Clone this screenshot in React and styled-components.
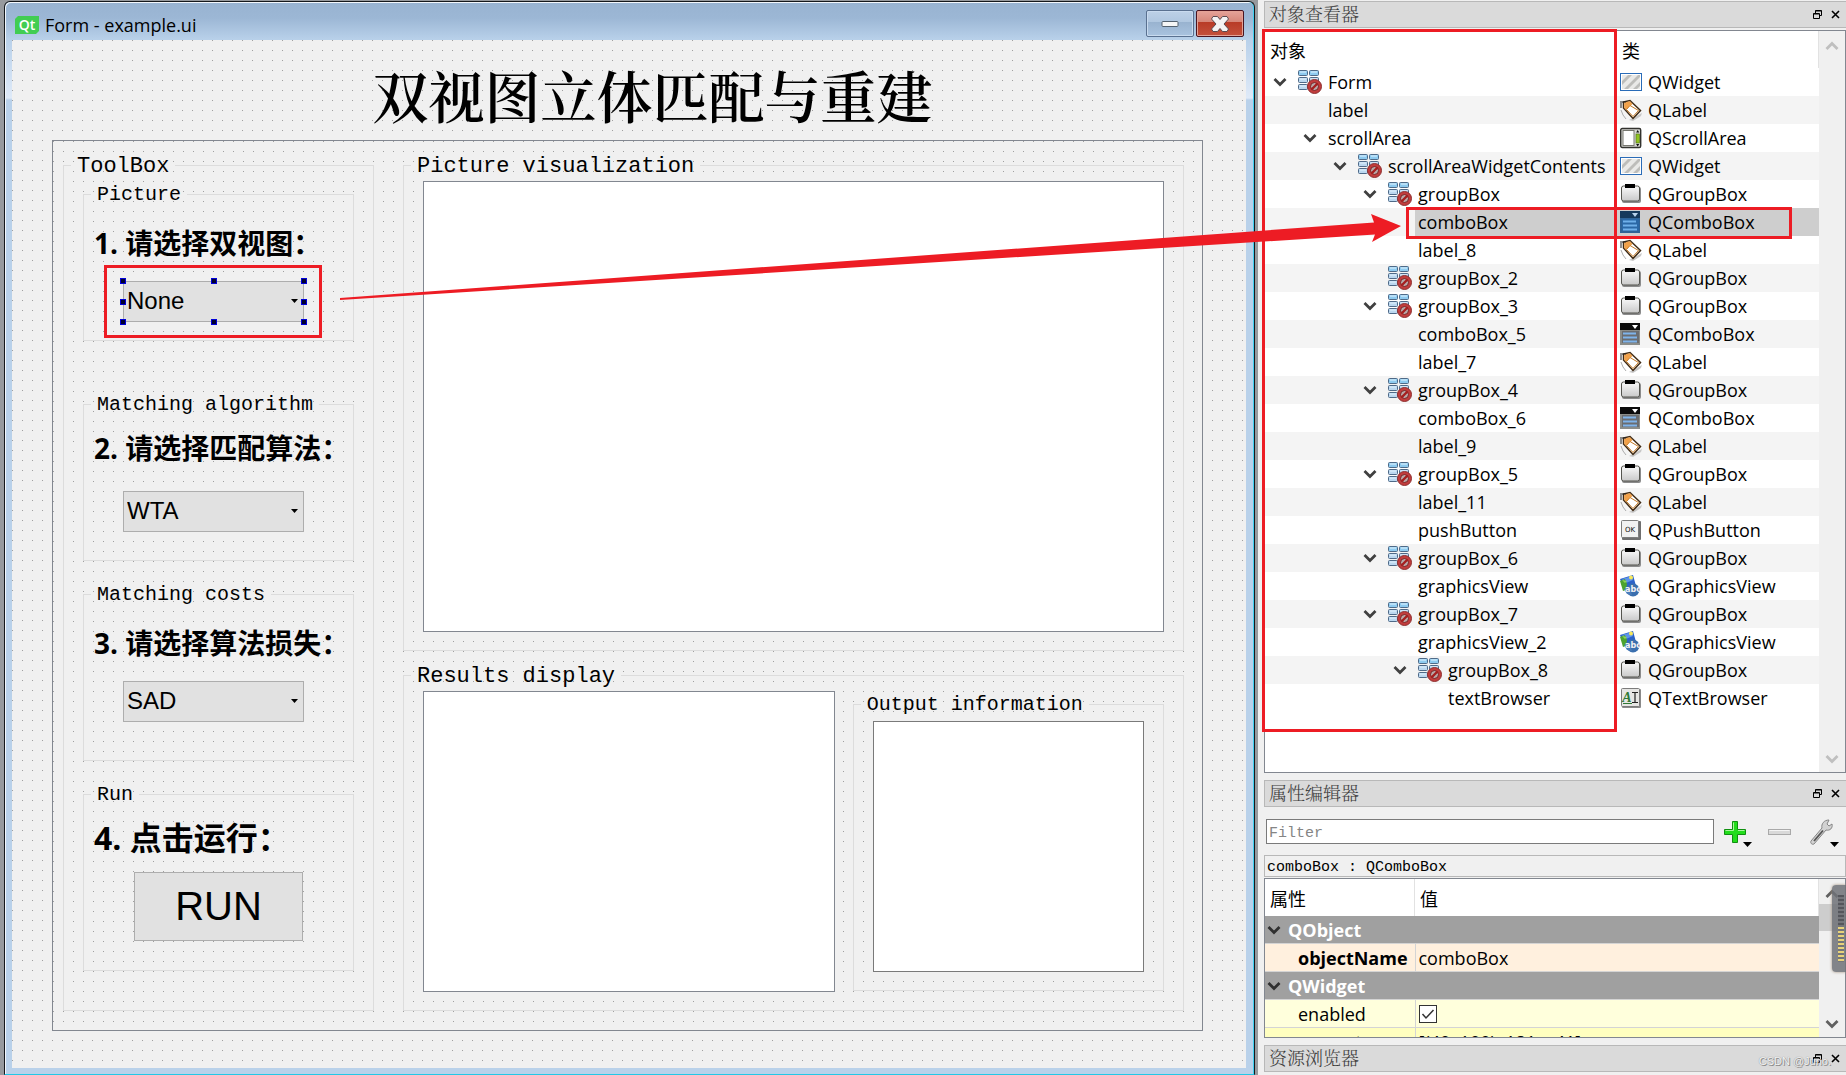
import React, { useState } from "react";
import styled, { createGlobalStyle } from "styled-components";

const RED = "#ed1c24";
const UI_FONT = `"Open Sans", "Noto Sans CJK SC", sans-serif`;
const SONG_FONT = `"Liberation Mono", "Noto Serif CJK SC", "Noto Sans CJK SC", monospace`;

const GlobalStyle = createGlobalStyle`
  * {
    box-sizing: border-box;
  }
  body {
    margin: 0;
    background: #f0f0f0;
    color: #000;
    font-family: ${UI_FONT};
    overflow: hidden;
  }
`;

const PageStyled = styled.div`
  position: relative;
  display: grid;
  grid-template-columns: 1258fr 588fr;
  min-height: 100vh;
`;

/* ---------- form window ---------- */

const DeskStyled = styled.div`
  background: #979a9e;
  padding: 1px 3px 0 4px;
`;

const WindowStyled = styled.section`
  display: flex;
  flex-direction: column;
  height: 100%;
  border: 1px solid #15181c;
  border-bottom: 1px solid #22c8e6;
  border-top-left-radius: 6px;
  border-top-right-radius: 6px;
  box-shadow: inset -1px 0 #3fd0f0, inset 1px 1px #f2f7fc;
  padding: 1px 8px 6px 7px;
  background: linear-gradient(
    #98b3d1 0,
    #9cb7d5 16px,
    #b9d1ea 38px,
    #dfeaf8 96px,
    #b9d1ea 98px
  );
`;

const TitleBarStyled = styled.header`
  display: flex;
  align-items: center;
  gap: 6px;
  height: 37px;
  padding: 7px 2px 0 3px;
`;

const WindowTitleStyled = styled.h1`
  flex: 1;
  margin: 0;
  font-size: 18px;
  font-weight: 400;
  line-height: 24px;
`;

const WindowButtonsStyled = styled.div`
  display: flex;
  align-self: flex-start;
  gap: 2px;
`;

const WindowButtonStyled = styled.button`
  display: flex;
  align-items: center;
  justify-content: center;
  width: 48px;
  height: 27px;
  padding: 0;
  border: 1px solid ${(props) => (props.$close ? "#4a1420" : "#5a7190")};
  border-radius: 2px;
  box-shadow: inset 0 0 0 1px
    ${(props) => (props.$close ? "#e3a296" : "#c9dbef")};
  background: ${(props) =>
    props.$close
      ? "linear-gradient(#e5a399 0, #d6877a 42%, #b83a26 43%, #c4513c 100%)"
      : "linear-gradient(#bdd1e7 0, #b0c7e0 42%, #98b2cf 43%, #a9c3df 100%)"};
`;

const CanvasStyled = styled.main`
  flex: 1;
  display: flex;
  flex-direction: column;
  padding: 0 43px 37px 40px;
  background-color: #f0f0f0;
  background-image: conic-gradient(
    from 0deg at 1px 1px,
    transparent 75%,
    #a0a0a0 75%
  );
  background-size: 10px 10px;
`;

const FormTitleStyled = styled.h2`
  margin: 0;
  padding-left: 50px;
  font-family: "Noto Serif CJK SC", "Noto Sans CJK SC", serif;
  font-size: 56px;
  font-weight: 600;
  line-height: 108px;
  height: 100px;
  text-align: center;
  white-space: nowrap;
`;

const ScrollAreaStyled = styled.div`
  flex: 1;
  display: flex;
  gap: 29px;
  padding: 13px 18px 19px 10px;
  border: 1px solid #828790;
  background-color: #f0f0f0;
  background-image: conic-gradient(
    from 0deg at 1px 1px,
    transparent 75%,
    #a0a0a0 75%
  );
  background-size: 10px 10px;
`;

const GroupStyled = styled.fieldset`
  display: flex;
  flex-direction: column;
  flex: ${(props) => props.$flex || "none"};
  min-width: 0;
  margin: ${(props) => props.$margin || "0"};
  padding: 0;
  border: 1px solid #dcdcdc;
`;

const GroupTitleStyled = styled.legend`
  margin-left: 7px;
  padding: 0 6px;
  font-family: "Liberation Mono", monospace;
  font-size: ${(props) => (props.$small ? "20px" : "22px")};
  line-height: ${(props) => (props.$small ? "24px" : "26px")};
  height: 23px;
`;

const ToolListStyled = styled.div`
  display: flex;
  flex-direction: column;
  gap: 22px;
  width: 309px;
  padding: 6px 19px 39px;
`;

const ToolBodyStyled = styled.div`
  display: flex;
  flex-direction: column;
  align-items: flex-start;
  gap: ${(props) => props.$gap};
  padding: ${(props) => props.$pad};
`;

const StepLabelStyled = styled.label`
  padding-left: 10px;
  font-size: ${(props) => (props.$large ? "32px" : "28px")};
  font-weight: 700;
  line-height: 40px;
  height: 40px;
  white-space: nowrap;
`;

const ComboWrapStyled = styled.div`
  position: relative;
  width: 181px;
  height: 41px;
  margin-left: 39px;
`;

const ComboStyled = styled.select`
  appearance: none;
  width: 100%;
  height: 100%;
  padding: 0 3px 2px;
  border: 1px solid #adadad;
  border-radius: 0;
  background: #e1e1e1;
  color: #000;
  font-family: "Liberation Sans", sans-serif;
  font-size: 24px;
`;

const ComboArrowStyled = styled.svg`
  position: absolute;
  right: 6px;
  top: 18px;
  pointer-events: none;
`;

const HandleStyled = styled.i`
  position: absolute;
  left: ${(props) => props.$x};
  top: ${(props) => props.$y};
  width: 6px;
  height: 6px;
  margin: -3px;
  background: #000030;
  border: 1px solid #0000d8;
`;

const MarkStyled = styled.div`
  position: absolute;
  inset: ${(props) => props.$inset};
  border: 3px solid ${RED};
  pointer-events: none;
`;

const RunButtonStyled = styled.button`
  width: 169px;
  height: 69px;
  margin-left: 50px;
  padding: 0;
  border: 1px solid #adadad;
  background: #e1e1e1;
  color: #000;
  font-family: "Liberation Sans", sans-serif;
  font-size: 40px;
`;

const DisplayColumnStyled = styled.div`
  flex: 1;
  min-width: 0;
  display: flex;
  flex-direction: column;
  gap: 13px;
`;

const DisplayBodyStyled = styled.div`
  flex: 1;
  display: flex;
  gap: 18px;
  padding: ${(props) => props.$top || "4px"} 19px 18px;
`;

const ViewStyled = styled.div`
  flex: ${(props) => props.$grow || 1} 1 0;
  border: 1px solid ${(props) => (props.$plain ? "#7a7a7a" : "#828790")};
  background: #fff;
`;

/* ---------- docks ---------- */

const DockColumnStyled = styled.aside`
  display: flex;
  flex-direction: column;
  min-width: 0;
  padding: 1px 0 3px 6px;
`;

const DockTitleStyled = styled.header`
  display: flex;
  align-items: center;
  gap: 9px;
  height: 27px;
  padding: 0 6px 0 4px;
  border: 1px solid #b8b8b8;
  border-right: none;
  background: #dadada;
  h2 {
    flex: 1;
    margin: 0;
    padding-top: 3px;
    color: #3c3c3c;
    font-family: ${SONG_FONT};
    font-size: 18px;
    font-weight: 300;
    line-height: 25px;
  }
`;

const IconButtonStyled = styled.button`
  display: flex;
  padding: 0;
  border: none;
  background: none;
`;

const TreeFrameStyled = styled.div`
  position: relative;
  flex: 1;
  display: flex;
  margin: 2px 0 7px;
  border: 1px solid #828790;
  background: #fff;
`;

const TableStyled = styled.table`
  flex: 1;
  align-self: flex-start;
  width: 0;
  border-collapse: collapse;
  table-layout: fixed;
  font-size: 18px;
  line-height: 27px;
  th,
  td {
    padding: 0;
    text-align: left;
    font-weight: 400;
    white-space: nowrap;
    overflow: hidden;
  }
`;

const HeadCellStyled = styled.th`
  width: ${(props) => props.$width || "auto"};
  height: 37px;
  box-shadow: inset -1px 0 ${(props) => (props.$line ? "#e2e2e2" : "#fff")};
  span {
    display: block;
    padding: 3px 0 0 5px;
  }
`;

const TreeRowStyled = styled.tr`
  height: 28px;
  background: ${(props) => (props.$odd ? "#f4f4f4" : "#fff")};
`;

const TreeCellStyled = styled.div`
  display: flex;
  height: 28px;
  padding-left: ${(props) => props.$level * 30}px;
`;

const BranchStyled = styled.span`
  flex: none;
  display: flex;
  align-items: center;
  justify-content: center;
  width: 30px;
  padding-right: 1px;
`;

const ItemStyled = styled.span`
  flex: 1;
  display: flex;
  align-items: center;
  gap: 6px;
  padding-left: 3px;
  background: ${(props) => (props.$selected ? "#cecece" : "none")};
`;

const ScrollBarStyled = styled.div`
  display: flex;
  flex-direction: column;
  align-items: center;
  width: 26px;
  padding: ${(props) => props.$pad};
  background: #f0f0f0;
`;

const ScrollThumbStyled = styled.div`
  align-self: stretch;
  height: 27px;
  margin: 5px 0 auto;
  background: #cdcdcd;
`;

const SpacerStyled = styled.div`
  flex: 1;
`;

const FilterBarStyled = styled.div`
  display: flex;
  align-items: center;
  gap: 10px;
  padding: 12px 6px 11px 2px;
`;

const FilterInputStyled = styled.input`
  flex: 1;
  min-width: 0;
  height: 25px;
  padding: 3px 2px 0;
  border: 1px solid #7a7a7a;
  background: #fff;
  font-family: ${SONG_FONT};
  font-size: 15px;
  &::placeholder {
    color: #858585;
  }
`;

const ToolGroupStyled = styled.div`
  display: flex;
  gap: 15px;
  height: 25px;
`;

const ObjectLineStyled = styled.div`
  height: 22px;
  margin-bottom: 1px;
  padding-left: 2px;
  border: 1px solid #b8b8b8;
  font-family: ${SONG_FONT};
  font-size: 15px;
  line-height: 23px;
  white-space: pre;
`;

const PropertyFrameStyled = styled.div`
  position: relative;
  display: flex;
  height: 160px;
  margin-bottom: 7px;
  border: 1px solid #828790;
  background: #fff;
  overflow: hidden;
`;

const PropertyRowStyled = styled.tr`
  height: 28px;
  background: ${(props) => props.$bg};
  box-shadow: inset 0 -1px #d4d4d4;
  th {
    padding-left: 33px;
    font-weight: ${(props) => (props.$bold ? 700 : 400)};
    border-right: 1px solid #d4d4d4;
  }
  td {
    padding-left: 3px;
  }
`;

const SectionRowStyled = styled.tr`
  height: 28px;
  background: #a0a0a0;
  box-shadow: inset 0 -1px #d4d4d4;
  color: #fff;
  th div {
    display: flex;
    align-items: center;
    gap: 7px;
    padding-left: 2px;
    font-weight: 700;
  }
`;

const CheckStyled = styled.input`
  appearance: none;
  display: block;
  width: 18px;
  height: 18px;
  margin: 0;
  border: 1px solid #333;
  background: #fff;
`;

const CheckWrapStyled = styled.label`
  position: relative;
  display: block;
  width: 18px;
  svg {
    position: absolute;
    left: 0;
    top: 0;
    pointer-events: none;
  }
`;

const MeterStyled = styled.div`
  position: absolute;
  right: 0;
  bottom: 103px;
  width: 14px;
  height: 87px;
  padding: 10px 2px 10px 6px;
  border-radius: 4px 0 0 4px;
  background: rgba(112, 114, 120, 0.86);
  box-shadow: 0 0 3px #a08c78;
`;

const MeterBarsStyled = styled.div`
  height: 100%;
  background: repeating-linear-gradient(
      transparent 0 2px,
      #74757a 2px 4px
    ),
    linear-gradient(#55565c 48%, #e8d27a 48%);
`;

const WatermarkStyled = styled.span`
  position: absolute;
  right: 15px;
  bottom: 6px;
  color: #f4f4f4;
  font-family: "Liberation Sans", sans-serif;
  font-size: 11px;
  line-height: 16px;
  text-shadow: 1px 1px #8c8c8c, 0 0 1px #777;
`;

const ArrowStyled = styled.svg`
  position: absolute;
  left: 0;
  top: 0;
  width: 100%;
  pointer-events: none;
`;

/* ---------- icons ---------- */

const QtLogo = () => (
  <svg width="24" height="18" viewBox="0 0 24 18">
    <path d="M3 0H24V15L21 18H0V3Z" fill="#41cd52" />
    <text
      x="12"
      y="14"
      fill="#fff"
      fontFamily="Open Sans"
      fontSize="14"
      fontWeight="600"
      textAnchor="middle"
    >
      Qt
    </text>
  </svg>
);

const MinimizeIcon = () => (
  <svg width="18" height="8" viewBox="0 0 18 8">
    <rect x="1" y="1.500" width="16" height="5" rx="1" fill="#f6f6f6" stroke="#54616f" />
  </svg>
);

const CloseIcon = () => (
  <svg width="18" height="16" viewBox="0 0 18 16">
    <path
      d="M2 .5H6.500L9 3.500L11.500 .5H16L17.500 3L13 8L17.500 13L16 15.500H11.500L9 12.500L6.500 15.500H2L.5 13L5 8L.5 3Z"
      fill="#f4f4f4"
      stroke="#5a4a50"
    />
  </svg>
);

const FloatIcon = () => (
  <svg width="9" height="9" viewBox="0 0 9 9" fill="none" stroke="#000">
    <path d="M2.500 3V.500H8.500V5.500H6.500M2.500 1H8.500" />
    <path d="M.500 3.500H6.500V8.500H.500ZM.500 4H6" />
  </svg>
);

const SmallCloseIcon = () => (
  <svg width="9" height="9" viewBox="0 0 9 9">
    <path d="M1 1L8 8M8 1L1 8" stroke="#000" strokeWidth="1.600" />
  </svg>
);

const Chevron = ({ color = "#404040", up }) => (
  <svg width="14" height="10" viewBox="0 0 14 10">
    <path
      d={up ? "M1.500 8L7 2.500L12.500 8" : "M1.500 2L7 7.500L12.500 2"}
      fill="none"
      stroke={color}
      strokeWidth="2.800"
    />
  </svg>
);

const BrokenLayoutIcon = () => (
  <svg width="24" height="24" viewBox="0 0 24 24">
    {[0, 7, 14].map((y) =>
      [0, 11].map((x) => (
        <g key={`${x}-${y}`}>
          <rect x={x + 0.5} y={y + 0.5} width="9" height="5" rx="1" fill={y === 0 ? "#8ecbf0" : "#bcd8f0"} stroke="#4f6a88" />
          <path d={`M${x + 2} ${y + 2}h6`} stroke="#e2f3fd" />
        </g>
      ))
    )}
    <circle cx="16.500" cy="16.500" r="7" fill="#c23c3c" stroke="#8e3030" />
    <circle cx="16.500" cy="16.500" r="4" fill="#b9a9a9" stroke="#7c2020" />
    <path d="M13.500 19.500L19.500 13.500" stroke="#a51f1f" strokeWidth="2.400" />
  </svg>
);

const WidgetIcon = () => (
  <svg width="22" height="22" viewBox="0 0 22 22">
    <rect x=".5" y="2.500" width="21" height="17" fill="#fff" stroke="#2a6cb8" />
    <rect x="2" y="4" width="18" height="14" fill="#e9e9e7" />
    <path d="M2 10L8 4H12L2 14ZM4 18L18 4H20V6L8 18ZM13 18L20 11V15L17 18Z" fill="#bdbdba" />
  </svg>
);

const LabelIcon = () => (
  <svg width="22" height="22" viewBox="0 0 22 22">
    <path d="M9 21L22 14L21 17L13 22Z" fill="#c8c8c8" />
    <path d="M3.500 3L10 1.500L20.500 11.500L13 19.500L3.500 9Z" fill="#fff" stroke="#3f2a14" strokeWidth="1.500" />
    <path d="M4.200 3.600L10 2.300L12.500 5L6 11L4.200 8.800Z" fill="#f1a14a" />
    <path d="M10 6.500L6.500 10.500L13 17.500L18.500 11.500Z" fill="#fff" stroke="#c47a26" />
    <path d="M0 3H6M1 4V9" stroke="#222" fill="none" />
    <path d="M1 11L3 16L6 20" stroke="#999" strokeWidth=".8" fill="none" />
  </svg>
);

const ScrollIcon = () => (
  <svg width="22" height="22" viewBox="0 0 22 22">
    <rect x=".7" y="1.500" width="20" height="19" rx="1.500" fill="#d6d6d2" stroke="#33332f" strokeWidth="1.400" />
    <rect x="3" y="3.500" width="11" height="15" fill="#fff" stroke="#77776f" />
    <rect x="16" y="7" width="3.500" height="9" fill="#8fc320" stroke="#4b6b0c" strokeWidth=".6" />
    <path d="M17.700 3L19.300 5.500H16.100ZM17.700 19.500L19.300 17H16.100Z" fill="#111" />
  </svg>
);

const GroupIcon = () => (
  <svg width="22" height="22" viewBox="0 0 22 22">
    <defs>
      <linearGradient id="grp" x1="0" y1="0" x2="0" y2="1">
        <stop offset="0" stopColor="#fafafa" />
        <stop offset="1" stopColor="#c9c9c9" />
      </linearGradient>
    </defs>
    <rect x="2" y="4" width="19" height="16" rx="2" fill="#8c8c8c" />
    <rect x="1.500" y="3" width="18" height="15" rx="2" fill="url(#grp)" stroke="#55554f" />
    <rect x="5" y="1" width="10" height="4" fill="#000" />
  </svg>
);

const ComboIcon = ({ selected }) => (
  <svg width="22" height="22" viewBox="0 0 22 22">
    <rect x="0" y="0" width="20" height="22" fill={selected ? "#2f6397" : "#8b8d89"} />
    <rect x="0" y="0" width="20" height="7" fill={selected ? "#16395c" : "#0a0a0a"} />
    <path d="M12 2H18L15 6Z" fill={selected ? "#b9d3ec" : "#fff"} />
    <rect x="2" y="8" width="17" height="12" fill={selected ? "#2b68a6" : "#6b6d70"} />
    <path d="M3 10.500H16M3 14.500H17M3 18.500H17" stroke={selected ? "#6fb0ea" : "#7fb4ea"} strokeWidth="2" />
  </svg>
);

const PushIcon = () => (
  <svg width="22" height="22" viewBox="0 0 22 22">
    <rect x="2" y="2" width="19" height="19" rx="1" fill="#6f6f6f" />
    <rect x="1.500" y="1.500" width="17" height="17" rx="1" fill="#f1f1f1" stroke="#7c7c7c" />
    <text x="10" y="13" fontFamily="DejaVu Sans" fontSize="7" textAnchor="middle" fill="#111">
      OK
    </text>
  </svg>
);

const GraphicsIcon = () => (
  <svg width="22" height="22" viewBox="0 0 22 22">
    <path d="M0 4L13 0L16 11L4 15Z" fill="#2c62c8" />
    <path d="M2 4L12 1L13 5L6 8Z" fill="#5d93ea" />
    <path d="M0 6L5 4L7 9L6 15L3 16Z" fill="#4ca32e" />
    <path d="M2 5L7 6L5 8ZM4 9L8 10" fill="#8fd35a" />
    <circle cx="11" cy="2.500" r="2" fill="#f7e85a" />
    <circle cx="13" cy="15" r="6.500" fill="#3a6fae" />
    <path d="M4 14L9 12L12 20L7 19Z" fill="#4a7dbb" />
    <text x="13" y="17" fontFamily="DejaVu Sans" fontSize="8" fontWeight="700" textAnchor="middle" fill="#f2f2f2">
      abc
    </text>
  </svg>
);

const TextIcon = () => (
  <svg width="22" height="22" viewBox="0 0 22 22">
    <rect x="2" y="2" width="19" height="19" rx="1" fill="#8a8a8a" />
    <rect x="1.500" y="1.500" width="18" height="18" rx="1" fill="#e6e6e4" stroke="#7c7c7c" />
    <text x="7" y="15" fontFamily="Liberation Serif" fontSize="14" fontStyle="italic" fontWeight="700" textAnchor="middle" fill="#2f7a36">
      A
    </text>
    <path d="M3 16.500H12" stroke="#2f7a36" />
    <path d="M12 5.500H18M15 5.500V15.500M12 15.500H18" stroke="#222" strokeWidth="1.200" />
  </svg>
);

const AddIcon = () => (
  <svg width="29" height="28" viewBox="0 0 29 28">
    <path d="M8.500 2.500H13.500V10.500H21.500V15.500H13.500V23.500H8.500V15.500H.500V10.500H8.500Z" fill="#23dd1c" stroke="#108f10" />
    <path d="M9.500 3.500V11.500H1.500M14 11.500H20.500" stroke="#a8f79c" fill="none" />
    <path d="M19 23H28L23.500 28Z" fill="#000" />
  </svg>
);

const RemoveIcon = () => (
  <svg width="27" height="25" viewBox="0 0 27 25">
    <rect x=".5" y="10.500" width="22" height="5" fill="#d9d9d9" stroke="#a9a9a9" />
    <path d="M1.500 11.500H21.500" stroke="#f5f5f5" />
  </svg>
);

const WrenchIcon = () => (
  <svg width="30" height="28" viewBox="0 0 30 28">
    <path
      d="M1 22L12 9C11 5 14 1 19 1L17 5L19 7L22 5C23 9 20 12 16 11L4 25C2 26 0 24 1 22Z"
      fill="#d2d2d2"
      stroke="#858585"
    />
    <path d="M4 22L13 11.500" stroke="#555" strokeWidth="1.800" />
    <path d="M20 23H29L24.500 28Z" fill="#000" />
  </svg>
);

const CLASS_ICONS = {
  QWidget: WidgetIcon,
  QLabel: LabelIcon,
  QScrollArea: ScrollIcon,
  QGroupBox: GroupIcon,
  QComboBox: ComboIcon,
  QPushButton: PushIcon,
  QGraphicsView: GraphicsIcon,
  QTextBrowser: TextIcon,
};

/* ---------- data ---------- */

const objects = [
  { name: "Form", type: "QWidget", level: 0, open: true, layout: true },
  { name: "label", type: "QLabel", level: 1 },
  { name: "scrollArea", type: "QScrollArea", level: 1, open: true },
  { name: "scrollAreaWidgetContents", type: "QWidget", level: 2, open: true, layout: true },
  { name: "groupBox", type: "QGroupBox", level: 3, open: true, layout: true },
  { name: "comboBox", type: "QComboBox", level: 4 },
  { name: "label_8", type: "QLabel", level: 4 },
  { name: "groupBox_2", type: "QGroupBox", level: 3, layout: true },
  { name: "groupBox_3", type: "QGroupBox", level: 3, open: true, layout: true },
  { name: "comboBox_5", type: "QComboBox", level: 4 },
  { name: "label_7", type: "QLabel", level: 4 },
  { name: "groupBox_4", type: "QGroupBox", level: 3, open: true, layout: true },
  { name: "comboBox_6", type: "QComboBox", level: 4 },
  { name: "label_9", type: "QLabel", level: 4 },
  { name: "groupBox_5", type: "QGroupBox", level: 3, open: true, layout: true },
  { name: "label_11", type: "QLabel", level: 4 },
  { name: "pushButton", type: "QPushButton", level: 4 },
  { name: "groupBox_6", type: "QGroupBox", level: 3, open: true, layout: true },
  { name: "graphicsView", type: "QGraphicsView", level: 4 },
  { name: "groupBox_7", type: "QGroupBox", level: 3, open: true, layout: true },
  { name: "graphicsView_2", type: "QGraphicsView", level: 4 },
  { name: "groupBox_8", type: "QGroupBox", level: 4, open: true, layout: true },
  { name: "textBrowser", type: "QTextBrowser", level: 5 },
];

const handles = [
  ["0%", "0%"],
  ["50%", "0%"],
  ["100%", "0%"],
  ["0%", "50%"],
  ["100%", "50%"],
  ["0%", "100%"],
  ["50%", "100%"],
  ["100%", "100%"],
];

/* ---------- parts ---------- */

function Combo({ id, value, selected }) {
  return (
    <ComboWrapStyled>
      <ComboStyled id={id} defaultValue={value}>
        <option>{value}</option>
      </ComboStyled>
      <ComboArrowStyled width="7" height="4" viewBox="0 0 7 4">
        <path d="M0 0H7L3.500 4Z" />
      </ComboArrowStyled>
      {selected && handles.map(([x, y]) => <HandleStyled key={x + y} $x={x} $y={y} />)}
      {selected && <MarkStyled $inset="-16px -18px -16px -19px" />}
    </ComboWrapStyled>
  );
}

function ToolGroup({ title, label, htmlFor, large, pad, gap, margin, children }) {
  return (
    <GroupStyled $margin={margin}>
      <GroupTitleStyled $small>{title}</GroupTitleStyled>
      <ToolBodyStyled $pad={pad} $gap={gap}>
        <StepLabelStyled htmlFor={htmlFor} $large={large}>
          {label}
        </StepLabelStyled>
        {children}
      </ToolBodyStyled>
    </GroupStyled>
  );
}

function DockTitle({ children }) {
  return (
    <DockTitleStyled>
      <h2>{children}</h2>
      <IconButtonStyled type="button" aria-label="Float">
        <FloatIcon />
      </IconButtonStyled>
      <IconButtonStyled type="button" aria-label="Close">
        <SmallCloseIcon />
      </IconButtonStyled>
    </DockTitleStyled>
  );
}

function ObjectTree() {
  const [current, setCurrent] = useState("comboBox");

  return (
    <TreeFrameStyled>
      <TableStyled>
        <thead>
          <tr>
            <HeadCellStyled $width="352px">
              <span>对象</span>
            </HeadCellStyled>
            <HeadCellStyled $line>
              <span>类</span>
            </HeadCellStyled>
          </tr>
        </thead>
        <tbody>
          {objects.map((item, i) => {
            const Icon = CLASS_ICONS[item.type];
            const selected = item.name === current;
            return (
              <TreeRowStyled key={item.name} $odd={i % 2 === 1} onClick={() => setCurrent(item.name)}>
                <td>
                  <TreeCellStyled $level={item.level}>
                    <BranchStyled>{item.open && <Chevron />}</BranchStyled>
                    <ItemStyled $selected={selected}>
                      {item.layout && <BrokenLayoutIcon />}
                      {item.name}
                    </ItemStyled>
                  </TreeCellStyled>
                </td>
                <td>
                  <TreeCellStyled $level={0}>
                    <ItemStyled $selected={selected}>
                      <Icon selected={selected} />
                      {item.type}
                    </ItemStyled>
                  </TreeCellStyled>
                </td>
              </TreeRowStyled>
            );
          })}
        </tbody>
      </TableStyled>
      <ScrollBarStyled $pad="10px 0 8px">
        <Chevron up color="#bfbfbf" />
        <SpacerStyled />
        <Chevron color="#bfbfbf" />
      </ScrollBarStyled>
      <MarkStyled $inset="-2px 228px 40px -3px" />
      <MarkStyled $inset="176px 53px 533px 141px" />
    </TreeFrameStyled>
  );
}

function PropertyTable() {
  const [enabled, setEnabled] = useState(true);

  return (
    <PropertyFrameStyled>
      <TableStyled>
        <thead>
          <tr>
            <HeadCellStyled $width="150px" $line>
              <span>属性</span>
            </HeadCellStyled>
            <HeadCellStyled $line>
              <span>值</span>
            </HeadCellStyled>
          </tr>
        </thead>
        <tbody>
          <SectionRowStyled>
            <th colSpan="2">
              <div>
                <Chevron color="#303030" />
                QObject
              </div>
            </th>
          </SectionRowStyled>
          <PropertyRowStyled $bg="#fff0de" $bold>
            <th>objectName</th>
            <td>comboBox</td>
          </PropertyRowStyled>
          <SectionRowStyled>
            <th colSpan="2">
              <div>
                <Chevron color="#303030" />
                QWidget
              </div>
            </th>
          </SectionRowStyled>
          <PropertyRowStyled $bg="#ffffdc">
            <th id="enabled-name">enabled</th>
            <td>
              <CheckWrapStyled>
                <CheckStyled
                  type="checkbox"
                  aria-labelledby="enabled-name"
                  checked={enabled}
                  onChange={(e) => setEnabled(e.target.checked)}
                />
                {enabled && (
                  <svg width="18" height="18" viewBox="0 0 18 18">
                    <path d="M3.500 9L7 13L14.500 5" fill="none" stroke="#333" strokeWidth="1.500" />
                  </svg>
                )}
              </CheckWrapStyled>
            </td>
          </PropertyRowStyled>
          <PropertyRowStyled $bg="#ffffbf">
            <th>geometry</th>
            <td>[(40, 100), 181 x 41]</td>
          </PropertyRowStyled>
        </tbody>
      </TableStyled>
      <ScrollBarStyled $pad="10px 0 8px">
        <Chevron up color="#606060" />
        <ScrollThumbStyled />
        <Chevron color="#606060" />
      </ScrollBarStyled>
    </PropertyFrameStyled>
  );
}

export default function App() {
  return (
    <>
      <GlobalStyle />
      <PageStyled>
        <DeskStyled>
          <WindowStyled>
            <TitleBarStyled>
              <QtLogo />
              <WindowTitleStyled>Form - example.ui</WindowTitleStyled>
              <WindowButtonsStyled>
                <WindowButtonStyled type="button" aria-label="Minimize">
                  <MinimizeIcon />
                </WindowButtonStyled>
                <WindowButtonStyled type="button" aria-label="Close" $close>
                  <CloseIcon />
                </WindowButtonStyled>
              </WindowButtonsStyled>
            </TitleBarStyled>
            <CanvasStyled>
              <FormTitleStyled>双视图立体匹配与重建</FormTitleStyled>
              <ScrollAreaStyled>
                <GroupStyled>
                  <GroupTitleStyled>ToolBox</GroupTitleStyled>
                  <ToolListStyled>
                    <ToolGroup title="Picture" label="1. 请选择双视图：" htmlFor="picture" pad="17px 0 18px" gap="18px" margin="0 0 30px">
                      <Combo id="picture" value="None" selected />
                    </ToolGroup>
                    <ToolGroup title="Matching algorithm" label="2. 请选择匹配算法：" htmlFor="algorithm" pad="12px 0 28px" gap="23px">
                      <Combo id="algorithm" value="WTA" />
                    </ToolGroup>
                    <ToolGroup title="Matching costs" label="3. 请选择算法损失：" htmlFor="costs" pad="17px 0 38px" gap="18px">
                      <Combo id="costs" value="SAD" />
                    </ToolGroup>
                    <ToolGroup title="Run" label="4. 点击运行：" htmlFor="run" large pad="12px 0 29px" gap="14px">
                      <RunButtonStyled id="run" type="button">
                        RUN
                      </RunButtonStyled>
                    </ToolGroup>
                  </ToolListStyled>
                </GroupStyled>
                <DisplayColumnStyled>
                  <GroupStyled $flex="497 1 0">
                    <GroupTitleStyled>Picture visualization</GroupTitleStyled>
                    <DisplayBodyStyled>
                      <ViewStyled />
                    </DisplayBodyStyled>
                  </GroupStyled>
                  <GroupStyled $flex="347 1 0">
                    <GroupTitleStyled>Results display</GroupTitleStyled>
                    <DisplayBodyStyled>
                      <ViewStyled $grow={412} />
                      <GroupStyled $flex="311 1 0" $margin="2px 0 1px">
                        <GroupTitleStyled $small>Output information</GroupTitleStyled>
                        <DisplayBodyStyled $top="5px">
                          <ViewStyled $plain />
                        </DisplayBodyStyled>
                      </GroupStyled>
                    </DisplayBodyStyled>
                  </GroupStyled>
                </DisplayColumnStyled>
              </ScrollAreaStyled>
            </CanvasStyled>
          </WindowStyled>
        </DeskStyled>
        <DockColumnStyled>
          <DockTitle>对象查看器</DockTitle>
          <ObjectTree />
          <DockTitle>属性编辑器</DockTitle>
          <FilterBarStyled>
            <FilterInputStyled type="text" placeholder="Filter" aria-label="Filter" />
            <ToolGroupStyled>
              <IconButtonStyled type="button" aria-label="Add">
                <AddIcon />
              </IconButtonStyled>
              <IconButtonStyled type="button" aria-label="Remove">
                <RemoveIcon />
              </IconButtonStyled>
              <IconButtonStyled type="button" aria-label="Configure">
                <WrenchIcon />
              </IconButtonStyled>
            </ToolGroupStyled>
          </FilterBarStyled>
          <ObjectLineStyled>comboBox : QComboBox</ObjectLineStyled>
          <PropertyTable />
          <DockTitle>资源浏览器</DockTitle>
        </DockColumnStyled>
        <MeterStyled>
          <MeterBarsStyled />
        </MeterStyled>
        <WatermarkStyled>CSDN @Juno.</WatermarkStyled>
        <ArrowStyled viewBox="0 0 1846 1075">
          <path d="M340 298L1374 222.500L1371 214L1401 226L1372 242L1375 234.500L340 300Z" fill={RED} />
        </ArrowStyled>
      </PageStyled>
    </>
  );
}
